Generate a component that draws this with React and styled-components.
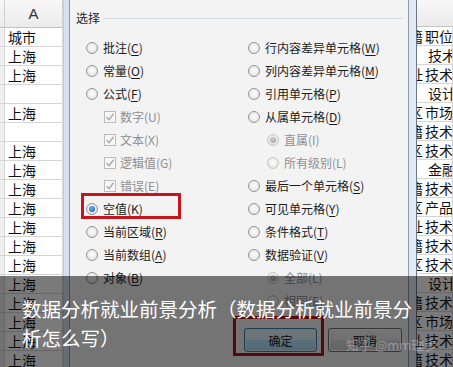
import styled, { createGlobalStyle } from "styled-components"

const GlobalStyle = createGlobalStyle`
  html, body {
    margin: 0;
    padding: 0;
  }
  body {
    background: #fff;
    font-family: "Noto Sans CJK SC", "Liberation Sans", sans-serif;
  }
`

// sheet data
const leftCells = [
  "城市", "上海", "上海", "", "上海", "",
  "上海", "上海", "上海", "上海", "上海", "上海",
  "上海", "上海", "上海", "上海", "上海", "上海",
]

const rightCells = [
  ["户籍", "职位"],
  ["", "技术"],
  ["地址", "技术"],
  ["", "设计"],
  ["区", "市场"],
  ["户籍", "技术"],
  ["地区", "技术"],
  ["", "金融"],
  ["户籍", "技术"],
  ["城区", "产品"],
  ["地址", "技术"],
  ["户籍", "技术"],
  ["地区", "技术"],
  ["", "设计"],
  ["户籍", "技术"],
  ["城区", "市场"],
  ["地址", "技术"],
  ["户籍", "技术"],
]

const leftOptions = [
  { label: "批注", hot: "C" },
  { label: "常量", hot: "O" },
  { label: "公式", hot: "F" },
  { label: "数字", hot: "U", check: true, disabled: true },
  { label: "文本", hot: "X", check: true, disabled: true },
  { label: "逻辑值", hot: "G", check: true, disabled: true },
  { label: "错误", hot: "E", check: true, disabled: true },
  { label: "空值", hot: "K", on: true, marked: true },
  { label: "当前区域", hot: "R" },
  { label: "当前数组", hot: "A" },
  { label: "对象", hot: "B" },
]

const rightOptions = [
  { label: "行内容差异单元格", hot: "W" },
  { label: "列内容差异单元格", hot: "M" },
  { label: "引用单元格", hot: "P" },
  { label: "从属单元格", hot: "D" },
  { label: "直属", hot: "I", indent: true, on: true, disabled: true },
  { label: "所有级别", hot: "L", indent: true, disabled: true },
  { label: "最后一个单元格", hot: "S" },
  { label: "可见单元格", hot: "Y" },
  { label: "条件格式", hot: "T" },
  { label: "数据验证", hot: "V" },
  { label: "全部", hot: "L", indent: true, on: true, disabled: true },
  { label: "相同", hot: "E", indent: true, disabled: true },
]

const App = () => {
  return (
    <>
      <GlobalStyle />
      <Screen>
        <Sheet>
          <Column $width={5}>
            <HeadCell $h={28} />
            {leftCells.map((_, i) => (
              <Cell key={i} $side />
            ))}
          </Column>
          <Column $width={58}>
            <HeadCell $h={28}>A</HeadCell>
            {leftCells.map((t, i) => (
              <Cell key={i}>{t}</Cell>
            ))}
          </Column>
        </Sheet>

        <Frame>
          <Panel>
            <GroupHead>
              <GroupTitle>选择</GroupTitle>
              <GroupLine />
            </GroupHead>
            <Options>
              <OptionCol $width={162}>
                {leftOptions.map((o, i) => (
                  <Option key={i} opt={o} />
                ))}
              </OptionCol>
              <OptionCol>
                {rightOptions.map((o, i) => (
                  <Option key={i} opt={o} />
                ))}
              </OptionCol>
            </Options>
            <Buttons>
              <Button $default $marked>确定</Button>
              <Button>取消</Button>
            </Buttons>
          </Panel>
        </Frame>

        <Sheet $grow>
          <Column $width={6}>
            <HeadCell $h={27} $plain />
            {rightCells.map(([prev], i) => (
              <Cell key={i} $clip $noRight $pad={0}>
                {prev}
              </Cell>
            ))}
          </Column>
          <Column>
            <HeadCell $h={27} $plain />
            {rightCells.map(([prev, t], i) => (
              <Cell key={i} $pad={prev ? 2 : 5}>
                {t}
              </Cell>
            ))}
          </Column>
        </Sheet>

        <Caption>
          数据分析就业前景分析（数据分析就业前景分析怎么写）
          <Watermark>知乎 @mm理步</Watermark>
        </Caption>
      </Screen>
    </>
  )
}

const Option = ({ opt }) => {
  const pad = opt.check ? 18 : opt.indent ? 19 : 0
  return (
    <OptionRow $pad={pad} $marked={opt.marked} $check={opt.check}>
      {opt.check ? (
        <CheckBox>
          <svg width='10' height='10' viewBox='0 0 10 10'>
            <path
              d='M1.5 5.2 L4 7.8 L8.6 1.8'
              fill='none'
              stroke='#a9a9a9'
              strokeWidth='1.4'
            />
          </svg>
        </CheckBox>
      ) : (
        <Radio $on={opt.on} $disabled={opt.disabled} />
      )}
      <Label $disabled={opt.disabled}>
        {opt.label}(
        {opt.disabled ? opt.hot : <u>{opt.hot}</u>})
      </Label>
    </OptionRow>
  )
}

const Screen = styled.div`
  position: relative;
  width: 453px;
  height: 367px;
  overflow: hidden;
  display: flex;
  background: #fff;
`

const Sheet = styled.div`
  display: flex;
  flex: ${(p) => (p.$grow ? 1 : "none")};
  min-width: 0;
`

const Column = styled.div`
  display: flex;
  flex-direction: column;
  width: ${(p) => (p.$width ? p.$width + "px" : "auto")};
  flex: ${(p) => (p.$width ? "none" : 1)};
  min-width: 0;
`

const HeadCell = styled.div`
  height: ${(p) => p.$h}px;
  flex: none;
  box-sizing: border-box;
  border-bottom: 1px solid #c2c2c2;
  border-right: ${(p) => (p.$plain ? "none" : "1px solid #cfcfcf")};
  background: linear-gradient(#f8f8f8, #ebebeb);
  display: flex;
  align-items: center;
  justify-content: center;
  font-family: "Liberation Sans", Arial, sans-serif;
  font-size: 15px;
  color: #333;
`

const Cell = styled.div`
  height: 19px;
  flex: none;
  box-sizing: border-box;
  border-bottom: 1px solid #d6d6d6;
  border-right: ${(p) => (p.$noRight ? "none" : "1px solid #d6d6d6")};
  background: ${(p) => (p.$side ? "#efefef" : "#fff")};
  display: flex;
  align-items: center;
  justify-content: ${(p) => (p.$clip ? "flex-end" : "flex-start")};
  padding-left: ${(p) => p.$pad ?? 3}px;
  overflow: hidden;
  white-space: nowrap;
  font-size: 14px;
  line-height: 1;
  color: #111;
`

const Frame = styled.div`
  flex: none;
  width: 354px;
  box-sizing: border-box;
  display: flex;
  padding: 0 7px 0 5px;
  border-left: 1px solid #c3cfdc;
  border-right: 1px solid #6d7886;
  background: linear-gradient(90deg, #d6e1ed, #e3ebf4);
`

const Panel = styled.div`
  flex: 1;
  display: flex;
  flex-direction: column;
  border-left: 1px solid #8e99a6;
  border-right: 1px solid #8e99a6;
  background: #f3f3f3;
  padding: 10px 5px 0 6px;
`

const GroupHead = styled.div`
  display: flex;
  align-items: center;
  gap: 3px;
  height: 16px;
`

const GroupTitle = styled.span`
  font-size: 12px;
  line-height: 16px;
  color: #1e1e1e;
`

const GroupLine = styled.div`
  flex: 1;
  border-top: 1px solid #d5dde4;
  margin-top: 1px;
`

const Options = styled.div`
  display: flex;
  margin-top: 10px;
  padding-left: 10px;
`

const OptionCol = styled.div`
  display: flex;
  flex-direction: column;
  width: ${(p) => (p.$width ? p.$width + "px" : "auto")};
  flex: ${(p) => (p.$width ? "none" : 1)};
`

const OptionRow = styled.div`
  position: relative;
  height: 23px;
  display: flex;
  align-items: center;
  gap: ${(p) => (p.$check ? 4 : 5)}px;
  padding-left: ${(p) => p.$pad}px;

  ${(p) =>
    p.$marked &&
    `
    &::before {
      content: "";
      position: absolute;
      left: -5px;
      top: -4px;
      width: 100px;
      height: 26px;
      box-sizing: border-box;
      border: 3px solid #c5161e;
    }
  `}
`

const Radio = styled.span`
  flex: none;
  width: 12px;
  height: 12px;
  box-sizing: border-box;
  border-radius: 50%;
  border: 1px solid ${(p) => (p.$disabled ? "#c6c6c6" : "#959595")};
  background: radial-gradient(
    circle at 50% 45%,
    #fdfdfd 0%,
    #ececec 55%,
    #d4d4d4 100%
  );
  display: flex;
  align-items: center;
  justify-content: center;

  &::after {
    content: "";
    display: ${(p) => (p.$on ? "block" : "none")};
    width: 6px;
    height: 6px;
    border-radius: 50%;
    background: ${(p) =>
      p.$disabled
        ? "radial-gradient(circle at 40% 35%, #d0d0d0, #9a9a9a)"
        : "radial-gradient(circle at 40% 35%, #6fb6f2, #0f4f9c)"};
  }
`

const CheckBox = styled.span`
  flex: none;
  width: 12px;
  height: 12px;
  box-sizing: border-box;
  border: 1px solid #bcbcbc;
  background: #f7f7f7;
  display: flex;
  align-items: center;
  justify-content: center;
`

const Label = styled.span`
  font-size: 12px;
  line-height: 1;
  white-space: nowrap;
  color: ${(p) => (p.$disabled ? "#8f8f8f" : "#1b1b1b")};

  u {
    text-underline-offset: 2px;
  }
`

const Buttons = styled.div`
  display: flex;
  justify-content: flex-end;
  gap: 11px;
  margin-top: 16px;
  padding-right: 1px;
`

const Button = styled.button`
  position: relative;
  width: ${(p) => (p.$default ? 73 : 74)}px;
  height: 24px;
  padding: 0;
  border-radius: 3px;
  border: 1px solid ${(p) => (p.$default ? "#3d7bad" : "#707070")};
  background: ${(p) =>
    p.$default
      ? "linear-gradient(#eaf6fd 0%, #d9f0fc 50%, #bee6fd 51%, #a7d9f5 100%)"
      : "linear-gradient(#f2f2f2 0%, #ebebeb 50%, #dddddd 51%, #cfcfcf 100%)"};
  box-shadow: ${(p) => (p.$default ? "inset 0 0 0 1px #d4eefb" : "inset 0 0 0 1px #fcfcfc")};
  font-family: "Noto Sans CJK SC", sans-serif;
  font-size: 12px;
  color: #1b1b1b;

  ${(p) =>
    p.$marked &&
    `
    &::before {
      content: "";
      position: absolute;
      left: -12px;
      top: -13px;
      width: 91px;
      height: 40px;
      box-sizing: border-box;
      border: 3px solid #b3141b;
    }
  `}
`

const Caption = styled.div`
  position: absolute;
  left: 0;
  right: 0;
  top: 276px;
  bottom: 0;
  box-sizing: border-box;
  padding: 18px 31px 0 22px;
  background: rgba(0, 0, 0, 0.52);
  color: #fff;
  font-size: 19.5px;
  line-height: 29px;
`

const Watermark = styled.span`
  position: absolute;
  left: 346px;
  top: 61px;
  font-size: 13px;
  line-height: 16px;
  color: rgba(255, 255, 255, 0.32);
  white-space: nowrap;
`

export default App
